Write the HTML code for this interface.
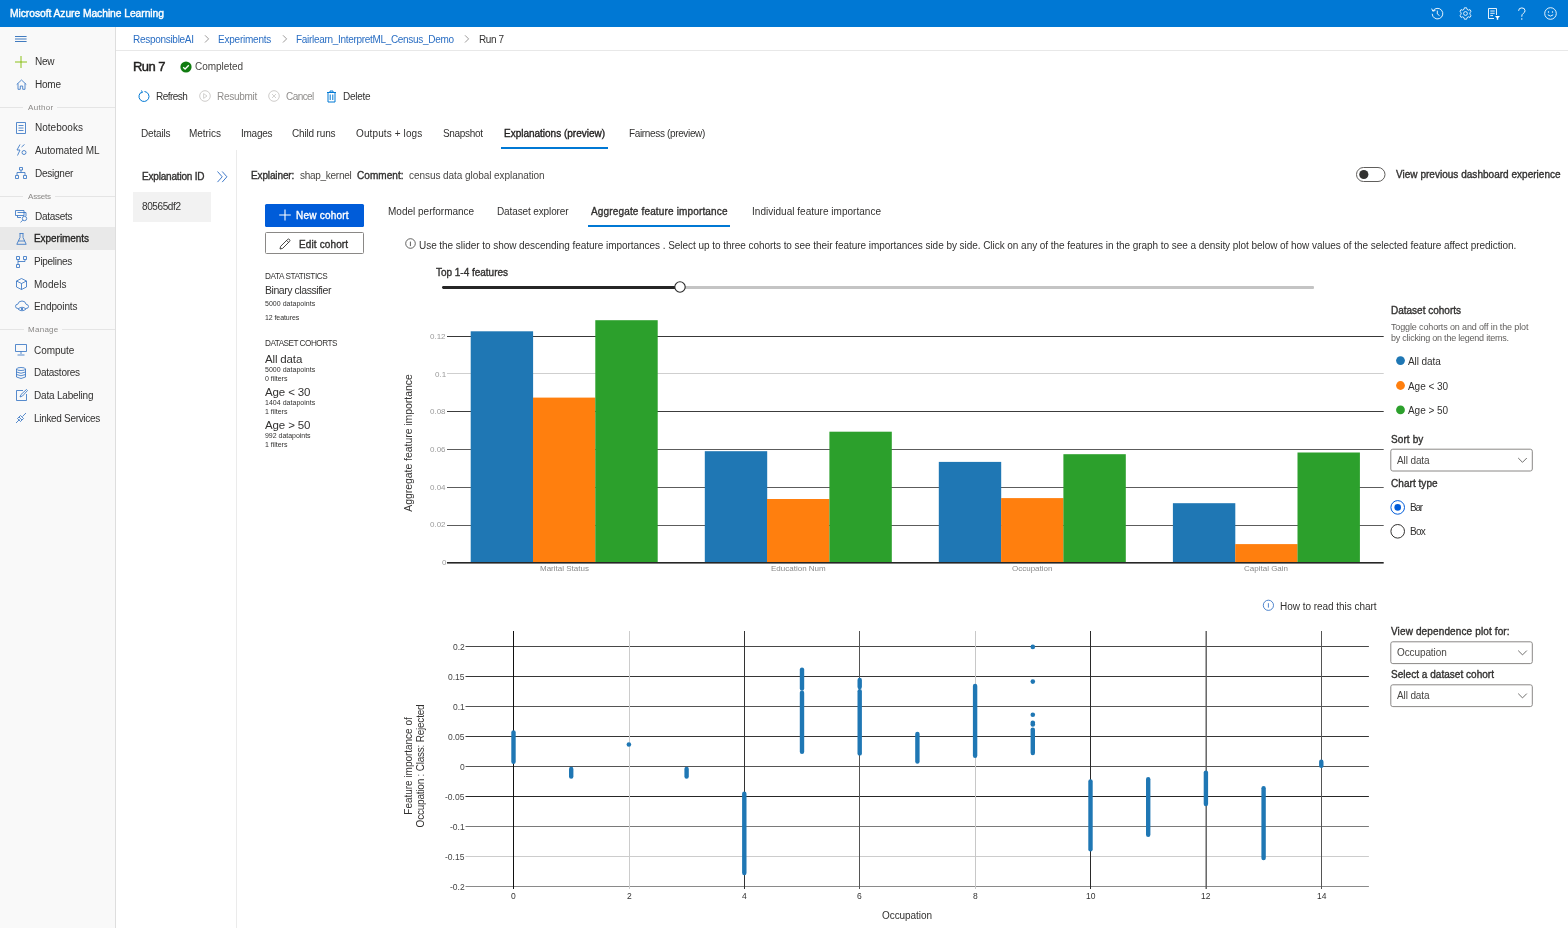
<!DOCTYPE html>
<html><head><meta charset="utf-8"><title>Azure Machine Learning - Run 7</title>
<style>
html,body{margin:0;padding:0;}
body{width:1568px;height:928px;overflow:hidden;position:relative;background:#fff;font-family:"Liberation Sans",sans-serif;}
.t{position:absolute;will-change:transform;white-space:nowrap;line-height:20px;height:20px;}
.r{position:absolute;}
svg{position:absolute;overflow:visible;}
</style></head><body>
<div class="r" style="left:0px;top:0px;width:1568px;height:27.3px;background:#0078d4;"></div>
<div class="r" style="left:0px;top:27px;width:115px;height:901px;background:#f9f9f9;"></div>
<div class="r" style="left:115px;top:27px;width:1px;height:901px;background:#dedede;"></div>
<div class="r" style="left:116px;top:50px;width:1452px;height:1px;background:#e8e8e8;"></div>
<div class="r" style="left:0px;top:227px;width:115px;height:22.6px;background:#e9e9e9;"></div>
<div class="r" style="left:0px;top:107px;width:23px;height:1px;background:#e5e5e5;"></div>
<div class="r" style="left:57px;top:107px;width:58px;height:1px;background:#e5e5e5;"></div>
<div class="r" style="left:0px;top:196px;width:23px;height:1px;background:#e5e5e5;"></div>
<div class="r" style="left:55px;top:196px;width:60px;height:1px;background:#e5e5e5;"></div>
<div class="r" style="left:0px;top:329px;width:24px;height:1px;background:#e5e5e5;"></div>
<div class="r" style="left:62px;top:329px;width:53px;height:1px;background:#e5e5e5;"></div>
<div class="r" style="left:236px;top:150px;width:1px;height:778px;background:#ebebeb;"></div>
<div class="r" style="left:133px;top:192px;width:78px;height:29.6px;background:#f2f2f2;"></div>
<div class="r" style="left:501px;top:147px;width:107px;height:2px;background:#0078d4;"></div>
<div class="r" style="left:588px;top:225px;width:142px;height:2px;background:#0078d4;"></div>
<div class="t" style="left:10.00px;top:4.20px;font-size:10.3px;color:#ffffff;letter-spacing:-0.056px;-webkit-text-stroke:0.4px #fff;">Microsoft Azure Machine Learning</div>
<div class="t" style="left:133.40px;top:29.60px;font-size:10px;color:#2a6ec3;letter-spacing:-0.290px;">ResponsibleAI</div>
<div class="t" style="left:296.00px;top:29.60px;font-size:10px;color:#2a6ec3;letter-spacing:-0.308px;">Fairlearn_InterpretML_Census_Demo</div>
<div class="t" style="left:218.40px;top:29.60px;font-size:10px;color:#2a6ec3;letter-spacing:-0.228px;">Experiments</div>
<div class="t" style="left:478.70px;top:29.60px;font-size:10px;color:#323130;letter-spacing:-0.421px;">Run 7</div>
<svg style="left:203.5px;top:34.6px" width="6" height="9" viewBox="0 0 6 9"><path d="M1 0.3 L4.6 3.9 L1 7.5" fill="none" stroke="#8a8886" stroke-width="0.85"/></svg>
<svg style="left:281.5px;top:34.6px" width="6" height="9" viewBox="0 0 6 9"><path d="M1 0.3 L4.6 3.9 L1 7.5" fill="none" stroke="#8a8886" stroke-width="0.85"/></svg>
<svg style="left:463.5px;top:34.6px" width="6" height="9" viewBox="0 0 6 9"><path d="M1 0.3 L4.6 3.9 L1 7.5" fill="none" stroke="#8a8886" stroke-width="0.85"/></svg>
<div class="t" style="left:133.40px;top:57.10px;font-size:13px;color:#201f1e;letter-spacing:-0.523px;-webkit-text-stroke:0.45px #201f1e;">Run 7</div>
<svg style="left:180px;top:61px" width="12" height="12" viewBox="0 0 12 12"><circle cx="6" cy="6" r="5.6" fill="#107c10"/><path d="M3.2 6.2 L5.1 8 L8.8 4.3" fill="none" stroke="#fff" stroke-width="1.3"/></svg>
<div class="t" style="left:195.00px;top:56.90px;font-size:10px;color:#484644;letter-spacing:-0.045px;">Completed</div>
<svg style="left:138px;top:89.8px" width="13" height="13" viewBox="0 0 13 13"><path d="M4.2 1.8 A5 5 0 1 0 6.5 1.5" fill="none" stroke="#0078d4" stroke-width="1"/><path d="M3.2 0.6 L4.6 1.9 L3.3 3.3" fill="none" stroke="#0078d4" stroke-width="1"/></svg>
<div class="t" style="left:155.80px;top:86.60px;font-size:10px;color:#323130;letter-spacing:-0.552px;">Refresh</div>
<svg style="left:198.5px;top:90px" width="12" height="12" viewBox="0 0 12 12"><circle cx="6" cy="6" r="5.3" fill="none" stroke="#c8c6c4" stroke-width="0.9"/><path d="M4.6 3.6 L8 6 L4.6 8.4 Z" fill="none" stroke="#c8c6c4" stroke-width="0.8"/></svg>
<div class="t" style="left:216.60px;top:86.60px;font-size:10px;color:#8f8d8b;letter-spacing:-0.291px;">Resubmit</div>
<svg style="left:267.5px;top:90px" width="12" height="12" viewBox="0 0 12 12"><circle cx="6" cy="6" r="5.3" fill="none" stroke="#c8c6c4" stroke-width="0.9"/><path d="M4 4 L8 8 M8 4 L4 8" stroke="#c8c6c4" stroke-width="0.8"/></svg>
<div class="t" style="left:285.50px;top:86.60px;font-size:10px;color:#8f8d8b;letter-spacing:-0.566px;">Cancel</div>
<svg style="left:325.5px;top:89.5px" width="11" height="13" viewBox="0 0 11 13"><path d="M1 2.5 H10 M4 2.5 V1 H7 V2.5 M2 2.5 V12 H9 V2.5 M4.2 4.5 V10 M6.8 4.5 V10" fill="none" stroke="#0078d4" stroke-width="1"/></svg>
<div class="t" style="left:343.00px;top:86.60px;font-size:10px;color:#323130;letter-spacing:-0.261px;">Delete</div>
<div class="t" style="left:140.50px;top:124.40px;font-size:10px;color:#323130;letter-spacing:-0.161px;">Details</div>
<div class="t" style="left:189.40px;top:124.40px;font-size:10px;color:#323130;letter-spacing:-0.037px;">Metrics</div>
<div class="t" style="left:240.50px;top:124.40px;font-size:10px;color:#323130;letter-spacing:-0.259px;">Images</div>
<div class="t" style="left:291.60px;top:124.40px;font-size:10px;color:#323130;letter-spacing:-0.158px;">Child runs</div>
<div class="t" style="left:355.90px;top:124.40px;font-size:10px;color:#323130;letter-spacing:0.118px;">Outputs + logs</div>
<div class="t" style="left:442.50px;top:124.40px;font-size:10px;color:#323130;letter-spacing:-0.308px;">Snapshot</div>
<div class="t" style="left:503.90px;top:124.40px;font-size:10px;color:#201f1e;letter-spacing:-0.008px;-webkit-text-stroke:0.35px #201f1e;">Explanations (preview)</div>
<div class="t" style="left:628.60px;top:124.40px;font-size:10px;color:#323130;letter-spacing:-0.350px;">Fairness (preview)</div>
<svg style="left:15.3px;top:34px" width="13" height="10" viewBox="0 0 13 10"><path d="M0 2.5 H11.6 M0 5 H11.6 M0 7.5 H11.6" stroke="#2b6cb8" stroke-width="0.9"/></svg>
<svg style="left:15px;top:55.5px" width="12" height="12" viewBox="0 0 12 12"><path d="M6 0 V12 M0 6 H12" stroke="#7fba00" stroke-width="0.9"/></svg>
<div class="t" style="left:34.50px;top:52.20px;font-size:10px;color:#323130;letter-spacing:-0.252px;">New</div>
<svg style="left:15.5px;top:79px" width="11" height="11" viewBox="0 0 11 11"><path d="M0.7 5.5 L5.5 1 L10.3 5.5 M2 4.5 V10.3 H4.3 V7 H6.7 V10.3 H9 V4.5" fill="none" stroke="#2d6fc2" stroke-width="0.8"/></svg>
<div class="t" style="left:34.50px;top:75.20px;font-size:10px;color:#323130;letter-spacing:-0.225px;">Home</div>
<div class="t" style="left:27.80px;top:98.00px;font-size:8px;color:#8a8886;letter-spacing:0.326px;">Author</div>
<svg style="left:16px;top:121.5px" width="10" height="12" viewBox="0 0 10 12"><path d="M0.5 0.5 H9.5 V11.5 H0.5 Z M2.5 3.5 H7.5 M2.5 6 H7.5 M2.5 8.5 H7.5" fill="none" stroke="#2d6fc2" stroke-width="0.8"/></svg>
<div class="t" style="left:34.50px;top:118.20px;font-size:10px;color:#323130;letter-spacing:0.012px;">Notebooks</div>
<svg style="left:16px;top:144px" width="11" height="12" viewBox="0 0 11 12"><path d="M4 0.5 L1 6 H4 L1.5 11.5 M5.5 3 L8.5 0.5" fill="none" stroke="#2d6fc2" stroke-width="0.8"/><circle cx="8" cy="8.5" r="2" fill="none" stroke="#2d6fc2" stroke-width="0.8"/></svg>
<div class="t" style="left:34.50px;top:141.10px;font-size:10px;color:#323130;letter-spacing:-0.049px;">Automated ML</div>
<svg style="left:15px;top:167px" width="12" height="12" viewBox="0 0 12 12"><path d="M4.5 0.5 H7.5 V3 H4.5 Z M6 3 V5.5 M2 5.5 H10 M2 5.5 V8 M10 5.5 V8 M0.5 8.5 H3.5 V11.5 H0.5 Z M8.5 8.5 H11.5 V11.5 H8.5 Z" fill="none" stroke="#2d6fc2" stroke-width="0.8"/></svg>
<div class="t" style="left:34.50px;top:163.60px;font-size:10px;color:#323130;letter-spacing:-0.246px;">Designer</div>
<div class="t" style="left:28.00px;top:186.80px;font-size:8px;color:#8a8886;letter-spacing:-0.202px;">Assets</div>
<svg style="left:15px;top:210px" width="14" height="13" viewBox="0 0 14 13"><path d="M0.5 0.5 H9 V5.5 H0.5 Z M2.5 2.5 H11 V6 M2.5 5.5 V7.5 H6" fill="none" stroke="#2d6fc2" stroke-width="0.8"/><circle cx="9.5" cy="8.5" r="2.2" fill="none" stroke="#2d6fc2" stroke-width="0.8"/><path d="M7.8 10.2 L5.5 12.3" stroke="#2d6fc2" stroke-width="0.8"/></svg>
<div class="t" style="left:34.50px;top:206.60px;font-size:10px;color:#323130;letter-spacing:-0.280px;">Datasets</div>
<svg style="left:15.5px;top:232.5px" width="11" height="12" viewBox="0 0 11 12"><path d="M3.5 0.5 H7.5 M4 0.5 V4.5 L0.8 11.3 H10.2 L7 4.5 V0.5 M2.3 8 H8.7" fill="none" stroke="#2d6fc2" stroke-width="0.8"/></svg>
<div class="t" style="left:34.10px;top:229.40px;font-size:10px;color:#201f1e;letter-spacing:-0.048px;-webkit-text-stroke:0.3px #201f1e;">Experiments</div>
<svg style="left:15.5px;top:255.5px" width="11" height="12" viewBox="0 0 11 12"><path d="M0.5 0.5 H3.5 V3.5 H0.5 Z M7.5 0.5 H10.5 V3.5 H7.5 Z M0.5 8.5 H3.5 V11.5 H0.5 Z M2 3.5 V8.5 M9 3.5 V5.5 H2" fill="none" stroke="#2d6fc2" stroke-width="0.8"/></svg>
<div class="t" style="left:34.10px;top:252.10px;font-size:10px;color:#323130;letter-spacing:-0.285px;">Pipelines</div>
<svg style="left:15.5px;top:278px" width="11" height="12" viewBox="0 0 11 12"><path d="M5.5 0.5 L10.5 3 V9 L5.5 11.5 L0.5 9 V3 Z M0.5 3 L5.5 5.5 L10.5 3 M5.5 5.5 V11.5" fill="none" stroke="#2d6fc2" stroke-width="0.8"/></svg>
<div class="t" style="left:34.10px;top:274.60px;font-size:10px;color:#323130;letter-spacing:0.033px;">Models</div>
<svg style="left:14.5px;top:300px" width="14" height="13" viewBox="0 0 14 13"><path d="M3 8.5 Q0.5 8.5 0.5 6.3 Q0.5 4.2 2.8 4.2 Q3.5 1 7 1 Q10.5 1 11 4.2 Q13.5 4.5 13.5 6.5 Q13.5 8.5 11 8.5" fill="none" stroke="#2d6fc2" stroke-width="0.8"/><path d="M3 9 Q7 5.5 11 9 Q7 12.5 3 9 Z" fill="none" stroke="#2d6fc2" stroke-width="0.8"/><circle cx="7" cy="9" r="1.1" fill="#2d6fc2"/></svg>
<div class="t" style="left:34.10px;top:297.40px;font-size:10px;color:#323130;letter-spacing:-0.122px;">Endpoints</div>
<div class="t" style="left:27.70px;top:319.90px;font-size:8px;color:#8a8886;letter-spacing:0.278px;">Manage</div>
<svg style="left:15px;top:344px" width="12" height="12" viewBox="0 0 12 12"><path d="M0.5 0.5 H11.5 V7.5 H0.5 Z M6 7.5 V10 M2.5 11 H9.5" fill="none" stroke="#2d6fc2" stroke-width="0.8"/></svg>
<div class="t" style="left:34.10px;top:340.60px;font-size:10px;color:#323130;letter-spacing:-0.029px;">Compute</div>
<svg style="left:16px;top:366.5px" width="10" height="12" viewBox="0 0 10 12"><ellipse cx="5" cy="2" rx="4.5" ry="1.5" fill="none" stroke="#2d6fc2" stroke-width="0.8"/><path d="M0.5 2 V10 Q5 13 9.5 10 V2 M0.5 5 Q5 7.5 9.5 5 M0.5 7.5 Q5 10 9.5 7.5" fill="none" stroke="#2d6fc2" stroke-width="0.8"/></svg>
<div class="t" style="left:34.10px;top:363.30px;font-size:10px;color:#323130;letter-spacing:-0.251px;">Datastores</div>
<svg style="left:15.5px;top:389px" width="12" height="12" viewBox="0 0 12 12"><path d="M0.5 1.5 H7 M0.5 1.5 V11.5 H10.5 V5 M4 8 L5 5.5 L10.5 0.5 L11.5 1.5 L6.5 7 Z" fill="none" stroke="#2d6fc2" stroke-width="0.8"/></svg>
<div class="t" style="left:34.10px;top:385.80px;font-size:10px;color:#323130;letter-spacing:-0.185px;">Data Labeling</div>
<svg style="left:15px;top:412px" width="12" height="12" viewBox="0 0 12 12"><path d="M1 11 L4.5 7.5 M7.5 4.5 L11 1 M2.5 6.5 L5.5 3.5 L8.5 6.5 L5.5 9.5 Z M4 5 L7 8" fill="none" stroke="#2d6fc2" stroke-width="0.8"/></svg>
<div class="t" style="left:34.10px;top:408.60px;font-size:10px;color:#323130;letter-spacing:-0.314px;">Linked Services</div>
<svg style="left:1430.5px;top:7px" width="13" height="13" viewBox="0 0 13 13"><path d="M1.9 4 A5.3 5.3 0 1 1 1.2 6.8" fill="none" stroke="#fff" stroke-width="0.9"/><path d="M0.7 1.6 L1.8 4.2 L4.4 3.4" fill="none" stroke="#fff" stroke-width="0.9"/><path d="M6.3 3.6 V6.9 L8.5 8.6" fill="none" stroke="#fff" stroke-width="0.9"/></svg>
<svg style="left:1459px;top:7px" width="13" height="13" viewBox="0 0 13 13"><path d="M5.4 0.8 H7.6 L8 2.4 L9.5 3.2 L11 2.6 L12.1 4.5 L10.9 5.6 V7.4 L12.1 8.5 L11 10.4 L9.5 9.8 L8 10.6 L7.6 12.2 H5.4 L5 10.6 L3.5 9.8 L2 10.4 L0.9 8.5 L2.1 7.4 V5.6 L0.9 4.5 L2 2.6 L3.5 3.2 L5 2.4 Z" fill="none" stroke="#fff" stroke-width="0.85"/><circle cx="6.5" cy="6.5" r="1.9" fill="none" stroke="#fff" stroke-width="0.85"/></svg>
<svg style="left:1488px;top:7.5px" width="13" height="12" viewBox="0 0 13 12"><path d="M0.5 0.5 H8.5 V7 M0.5 0.5 V10.5 H6 M2.3 3 H6.7 M2.3 5.3 H6.7 M2.3 7.6 H5" fill="none" stroke="#fff" stroke-width="0.9"/><path d="M7 8 H12 L10.2 10 V11.8 H8.8 V10 Z" fill="#fff"/></svg>
<svg style="left:1517px;top:7px" width="10" height="14" viewBox="0 0 10 14"><path d="M1.6 3.8 Q1.6 0.9 4.8 0.9 Q8 0.9 8 3.7 Q8 5.4 6.2 6.5 Q4.8 7.4 4.8 9.2 V9.8" fill="none" stroke="#fff" stroke-width="0.95"/><circle cx="4.8" cy="12" r="0.7" fill="#fff"/></svg>
<svg style="left:1544px;top:7px" width="13" height="13" viewBox="0 0 13 13"><circle cx="6.5" cy="6.5" r="5.8" fill="none" stroke="#fff" stroke-width="0.9"/><circle cx="4.5" cy="5" r="0.7" fill="#fff"/><circle cx="8.5" cy="5" r="0.7" fill="#fff"/><path d="M3.8 7.8 Q6.5 10.4 9.2 7.8" fill="none" stroke="#fff" stroke-width="0.9"/></svg>
<div class="t" style="left:141.60px;top:166.80px;font-size:10px;color:#323130;letter-spacing:-0.188px;-webkit-text-stroke:0.35px #323130;">Explanation ID</div>
<svg style="left:216.5px;top:170.8px" width="12" height="12" viewBox="0 0 12 12"><path d="M0.5 0.5 L5.2 5.8 L0.5 11.1 M5.2 0.5 L9.9 5.8 L5.2 11.1" fill="none" stroke="#2b6cc4" stroke-width="0.9"/></svg>
<div class="t" style="left:141.60px;top:197.00px;font-size:10px;color:#323130;letter-spacing:-0.387px;">80565df2</div>
<div class="t" style="left:250.70px;top:165.50px;font-size:10px;color:#323130;letter-spacing:-0.130px;-webkit-text-stroke:0.35px #323130;">Explainer:</div>
<div class="t" style="left:299.80px;top:165.50px;font-size:10px;color:#484644;letter-spacing:-0.278px;">shap_kernel</div>
<div class="t" style="left:357.20px;top:165.50px;font-size:10px;color:#323130;letter-spacing:0.054px;-webkit-text-stroke:0.35px #323130;">Comment:</div>
<div class="t" style="left:408.90px;top:165.50px;font-size:10px;color:#484644;letter-spacing:-0.059px;">census data global explanation</div>
<svg style="left:1355.5px;top:166.5px" width="30" height="15" viewBox="0 0 30 15"><rect x="0.5" y="0.5" width="28.5" height="14" rx="7" fill="#fff" stroke="#605e5c" stroke-width="1"/><circle cx="7.8" cy="7.5" r="4.6" fill="#323130"/></svg>
<div class="t" style="left:1396.10px;top:165.10px;font-size:10px;color:#323130;letter-spacing:0.024px;-webkit-text-stroke:0.35px #323130;">View previous dashboard experience</div>
<div class="r" style="left:264.8px;top:204.1px;width:99.1px;height:22.8px;background:#005cd9;border-radius:1.5px;"></div>
<svg style="left:279px;top:209.4px" width="13" height="13" viewBox="0 0 13 13"><path d="M6 0.5 V11.5 M0.2 6 H11.8" stroke="#fff" stroke-width="1.1"/></svg>
<div class="t" style="left:296.30px;top:206.10px;font-size:10px;color:#ffffff;letter-spacing:0.225px;-webkit-text-stroke:0.35px #ffffff;">New cohort</div>
<div class="r" style="left:264.8px;top:232.3px;width:97.7px;height:20.2px;background:#fff;border:1px solid #8a8886;border-radius:1.5px;"></div>
<svg style="left:279px;top:237.5px" width="12" height="12" viewBox="0 0 12 12"><path d="M1 11 L1.6 8.4 L8.6 1.4 Q9.6 0.6 10.5 1.5 Q11.4 2.4 10.6 3.4 L3.6 10.4 Z M7.6 2.4 L9.6 4.4" fill="none" stroke="#323130" stroke-width="0.9"/></svg>
<div class="t" style="left:298.90px;top:235.40px;font-size:10px;color:#323130;letter-spacing:0.130px;-webkit-text-stroke:0.35px #323130;">Edit cohort</div>
<div class="t" style="left:264.80px;top:267.20px;font-size:8.2px;color:#323130;letter-spacing:-0.410px;">DATA STATISTICS</div>
<div class="t" style="left:264.80px;top:280.20px;font-size:10.5px;color:#323130;letter-spacing:-0.445px;">Binary classifier</div>
<div class="t" style="left:264.80px;top:294.10px;font-size:7px;color:#323130;letter-spacing:0.027px;">5000 datapoints</div>
<div class="t" style="left:264.80px;top:307.80px;font-size:7px;color:#323130;letter-spacing:-0.082px;">12 features</div>
<div class="t" style="left:264.80px;top:334.10px;font-size:8.2px;color:#323130;letter-spacing:-0.506px;">DATASET COHORTS</div>
<div class="t" style="left:264.80px;top:348.80px;font-size:11.5px;color:#323130;letter-spacing:-0.151px;">All data</div>
<div class="t" style="left:264.80px;top:360.00px;font-size:7px;color:#323130;letter-spacing:0.027px;">5000 datapoints</div>
<div class="t" style="left:264.80px;top:369.00px;font-size:7px;color:#323130;letter-spacing:-0.020px;">0 filters</div>
<div class="t" style="left:264.80px;top:382.00px;font-size:11.5px;color:#323130;letter-spacing:-0.123px;">Age &lt; 30</div>
<div class="t" style="left:264.80px;top:392.80px;font-size:7px;color:#323130;letter-spacing:0.027px;">1404 datapoints</div>
<div class="t" style="left:264.80px;top:402.00px;font-size:7px;color:#323130;letter-spacing:-0.020px;">1 filters</div>
<div class="t" style="left:264.80px;top:414.70px;font-size:11.5px;color:#323130;letter-spacing:-0.123px;">Age &gt; 50</div>
<div class="t" style="left:264.80px;top:425.60px;font-size:7px;color:#323130;letter-spacing:-0.025px;">992 datapoints</div>
<div class="t" style="left:264.80px;top:435.20px;font-size:7px;color:#323130;letter-spacing:-0.020px;">1 filters</div>
<div class="t" style="left:387.60px;top:201.80px;font-size:10px;color:#323130;">Model performance</div>
<div class="t" style="left:496.80px;top:201.80px;font-size:10px;color:#323130;letter-spacing:-0.118px;">Dataset explorer</div>
<div class="t" style="left:590.80px;top:201.80px;font-size:10px;color:#323130;letter-spacing:0.155px;-webkit-text-stroke:0.35px #323130;">Aggregate feature importance</div>
<div class="t" style="left:752.00px;top:201.80px;font-size:10px;color:#323130;letter-spacing:0.021px;">Individual feature importance</div>
<svg style="left:405.1px;top:237.5px" width="11" height="11" viewBox="0 0 11 11"><circle cx="5.5" cy="5.5" r="4.8" fill="none" stroke="#323130" stroke-width="0.75"/><path d="M5.4 3.6 V8.1" stroke="#323130" stroke-width="0.8"/></svg>
<div class="t" style="left:419.00px;top:236.40px;font-size:10px;color:#323130;letter-spacing:-0.047px;">Use the slider to show descending feature importances . Select up to three cohorts to see their feature importances side by side. Click on any of the features in the graph to see a density plot below of how values of the selected feature affect prediction.</div>
<div class="t" style="left:436.00px;top:262.80px;font-size:10px;color:#323130;letter-spacing:-0.018px;-webkit-text-stroke:0.35px #323130;">Top 1-4 features</div>
<div class="r" style="left:442px;top:285.9px;width:237px;height:2.8px;background:#262626;border-radius:1.4px;"></div>
<div class="r" style="left:679px;top:286.2px;width:635px;height:2.5px;background:#c4c4c4;border-radius:1px;"></div>
<svg style="left:672.5px;top:280.4px" width="14" height="14" viewBox="0 0 14 14"><circle cx="7" cy="7" r="5.2" fill="#fff" stroke="#2a2a2a" stroke-width="1.1"/></svg>
<svg style="left:0;top:0" width="1568" height="928" viewBox="0 0 1568 928">
<rect x="447" y="336" width="936.7" height="1" fill="#383838"/>
<rect x="447" y="373" width="936.7" height="1" fill="#cfcfcf"/>
<rect x="447" y="411" width="936.7" height="1" fill="#3c3c3c"/>
<rect x="447" y="449" width="936.7" height="1" fill="#5c5c5c"/>
<rect x="447" y="487" width="936.7" height="1" fill="#5c5c5c"/>
<rect x="447" y="525" width="936.7" height="1" fill="#5c5c5c"/>
<rect x="470.7" y="331.3" width="62.4" height="231.0" fill="#1f77b4"/>
<rect x="533.0" y="397.6" width="62.4" height="164.7" fill="#ff7f0e"/>
<rect x="595.3" y="320.2" width="62.4" height="242.1" fill="#2ca02c"/>
<rect x="704.8" y="451.2" width="62.4" height="111.1" fill="#1f77b4"/>
<rect x="767.0" y="499.0" width="62.4" height="63.3" fill="#ff7f0e"/>
<rect x="829.4" y="431.7" width="62.4" height="130.6" fill="#2ca02c"/>
<rect x="938.8" y="461.9" width="62.4" height="100.4" fill="#1f77b4"/>
<rect x="1001.1" y="498.1" width="62.4" height="64.2" fill="#ff7f0e"/>
<rect x="1063.4" y="454.2" width="62.4" height="108.1" fill="#2ca02c"/>
<rect x="1172.9" y="503.2" width="62.4" height="59.1" fill="#1f77b4"/>
<rect x="1235.2" y="544.1" width="62.4" height="18.2" fill="#ff7f0e"/>
<rect x="1297.5" y="452.5" width="62.4" height="109.8" fill="#2ca02c"/>
<rect x="447" y="562" width="936.7" height="1.6" fill="#262626"/>
<rect x="465.5" y="646" width="903.4" height="1" fill="#474747"/>
<rect x="465.5" y="676" width="903.4" height="1" fill="#363636"/>
<rect x="465.5" y="706" width="903.4" height="1" fill="#555555"/>
<rect x="465.5" y="736" width="903.4" height="1" fill="#363636"/>
<rect x="465.5" y="766" width="903.4" height="1" fill="#555555"/>
<rect x="465.5" y="796" width="903.4" height="1" fill="#262626"/>
<rect x="465.5" y="826" width="903.4" height="1" fill="#7a7a7a"/>
<rect x="465.5" y="856" width="903.4" height="1" fill="#cccccc"/>
<rect x="465.5" y="886" width="903.4" height="1" fill="#8a8a8a"/>
<rect x="513" y="631" width="1" height="258" fill="#111111"/>
<rect x="629" y="631" width="1" height="258" fill="#cccccc"/>
<rect x="744" y="631" width="1" height="258" fill="#333333"/>
<rect x="859" y="631" width="1" height="258" fill="#555555"/>
<rect x="975" y="631" width="1" height="258" fill="#c8c8c8"/>
<rect x="1090" y="631" width="1" height="258" fill="#2a2a2a"/>
<rect x="1205.5" y="631" width="1.4" height="258" fill="#5a5a5a"/>
<rect x="1321" y="631" width="1" height="258" fill="#555555"/>
<line x1="513.5" y1="732.5" x2="513.5" y2="761.8" stroke="#1f77b4" stroke-width="4.4" stroke-linecap="round"/>
<line x1="571.2" y1="768.9" x2="571.2" y2="776.5" stroke="#1f77b4" stroke-width="4.4" stroke-linecap="round"/>
<line x1="686.6" y1="768.9" x2="686.6" y2="776.5" stroke="#1f77b4" stroke-width="4.4" stroke-linecap="round"/>
<line x1="744.3" y1="793.7" x2="744.3" y2="873.0" stroke="#1f77b4" stroke-width="4.4" stroke-linecap="round"/>
<line x1="802.0" y1="669.6" x2="802.0" y2="688.6" stroke="#1f77b4" stroke-width="4.4" stroke-linecap="round"/>
<line x1="802.0" y1="692.8" x2="802.0" y2="751.7" stroke="#1f77b4" stroke-width="4.4" stroke-linecap="round"/>
<line x1="859.7" y1="679.9" x2="859.7" y2="687.0" stroke="#1f77b4" stroke-width="4.4" stroke-linecap="round"/>
<line x1="859.7" y1="691.2" x2="859.7" y2="753.4" stroke="#1f77b4" stroke-width="4.4" stroke-linecap="round"/>
<line x1="917.4" y1="734.0" x2="917.4" y2="761.6" stroke="#1f77b4" stroke-width="4.4" stroke-linecap="round"/>
<line x1="975.1" y1="686.0" x2="975.1" y2="755.8" stroke="#1f77b4" stroke-width="4.4" stroke-linecap="round"/>
<line x1="1032.8" y1="729.6" x2="1032.8" y2="753.1" stroke="#1f77b4" stroke-width="4.4" stroke-linecap="round"/>
<line x1="1090.5" y1="781.5" x2="1090.5" y2="849.3" stroke="#1f77b4" stroke-width="4.4" stroke-linecap="round"/>
<line x1="1148.2" y1="779.2" x2="1148.2" y2="834.7" stroke="#1f77b4" stroke-width="4.4" stroke-linecap="round"/>
<line x1="1205.9" y1="772.6" x2="1205.9" y2="804.1" stroke="#1f77b4" stroke-width="4.4" stroke-linecap="round"/>
<line x1="1263.6" y1="788.3" x2="1263.6" y2="858.0" stroke="#1f77b4" stroke-width="4.4" stroke-linecap="round"/>
<line x1="1321.3" y1="761.8" x2="1321.3" y2="765.8" stroke="#1f77b4" stroke-width="4.4" stroke-linecap="round"/>
<circle cx="628.9" cy="744.5" r="2.3" fill="#1f77b4"/>
<circle cx="1032.8" cy="646.9" r="2.3" fill="#1f77b4"/>
<circle cx="1032.8" cy="681.6" r="2.3" fill="#1f77b4"/>
<circle cx="1032.8" cy="714.7" r="2.3" fill="#1f77b4"/>
<circle cx="1032.8" cy="722.8" r="2.3" fill="#1f77b4"/>
<circle cx="1032.8" cy="724.4" r="2.3" fill="#1f77b4"/>
<circle cx="1400.5" cy="360.6" r="4.4" fill="#1f77b4"/>
<circle cx="1400.5" cy="385.5" r="4.4" fill="#ff7f0e"/>
<circle cx="1400.5" cy="409.9" r="4.4" fill="#2ca02c"/>
<rect x="1390.8" y="449.2" width="141.5" height="21.8" rx="2" fill="#fff" stroke="#8a8886" stroke-width="1"/>
<path d="M1518.2 458.0 L1522.5 462.3 L1526.8 458.0" fill="none" stroke="#605e5c" stroke-width="0.9"/>
<rect x="1390.8" y="641.8" width="141.5" height="21.8" rx="2" fill="#fff" stroke="#8a8886" stroke-width="1"/>
<path d="M1518.2 650.6 L1522.5 654.9 L1526.8 650.6" fill="none" stroke="#605e5c" stroke-width="0.9"/>
<rect x="1390.8" y="684.8" width="141.5" height="21.8" rx="2" fill="#fff" stroke="#8a8886" stroke-width="1"/>
<path d="M1518.2 693.6 L1522.5 697.9 L1526.8 693.6" fill="none" stroke="#605e5c" stroke-width="0.9"/>
<circle cx="1397.7" cy="507.4" r="6.8" fill="#fff" stroke="#005cd9" stroke-width="1"/><circle cx="1397.7" cy="507.4" r="3.3" fill="#005cd9"/>
<circle cx="1397.7" cy="531.3" r="6.8" fill="#fff" stroke="#323130" stroke-width="1"/>
<circle cx="1268.4" cy="605.3" r="5.1" fill="none" stroke="#3170c4" stroke-width="0.85"/><path d="M1268.4 603.2 V607.6" stroke="#3170c4" stroke-width="0.85"/>
</svg>
<div class="t" style="left:430.43px;top:326.80px;font-size:8px;color:#9a9a9a;">0.12</div>
<div class="t" style="left:434.88px;top:364.52px;font-size:8px;color:#9a9a9a;">0.1</div>
<div class="t" style="left:430.43px;top:402.24px;font-size:8px;color:#9a9a9a;">0.08</div>
<div class="t" style="left:430.43px;top:439.96px;font-size:8px;color:#9a9a9a;">0.06</div>
<div class="t" style="left:430.43px;top:477.68px;font-size:8px;color:#9a9a9a;">0.04</div>
<div class="t" style="left:430.43px;top:515.40px;font-size:8px;color:#9a9a9a;">0.02</div>
<div class="t" style="left:441.55px;top:553.12px;font-size:8px;color:#9a9a9a;">0</div>
<div class="t" style="left:539.75px;top:559.30px;font-size:8px;color:#8a8a8a;">Marital Status</div>
<div class="t" style="left:770.90px;top:559.30px;font-size:8px;color:#8a8a8a;">Education Num</div>
<div class="t" style="left:1012.07px;top:559.30px;font-size:8px;color:#8a8a8a;">Occupation</div>
<div class="t" style="left:1244.34px;top:559.30px;font-size:8px;color:#8a8a8a;">Capital Gain</div>
<div class="t" style="left:339.35px;top:432.60px;font-size:10.5px;color:#323130;letter-spacing:-0.053px;transform:rotate(-90deg);transform-origin:50% 50%;will-change:auto;">Aggregate feature importance</div>
<div class="t" style="left:1391.40px;top:301.20px;font-size:10px;color:#323130;-webkit-text-stroke:0.35px #323130;">Dataset cohorts</div>
<div class="t" style="left:1391.20px;top:316.60px;font-size:9px;color:#605e5c;letter-spacing:-0.140px;">Toggle cohorts on and off in the plot</div>
<div class="t" style="left:1391.20px;top:327.80px;font-size:9px;color:#605e5c;letter-spacing:-0.228px;">by clicking on the legend items.</div>
<div class="t" style="left:1407.90px;top:352.00px;font-size:10px;color:#323130;letter-spacing:-0.094px;">All data</div>
<div class="t" style="left:1407.90px;top:376.80px;font-size:10px;color:#323130;letter-spacing:-0.045px;">Age &lt; 30</div>
<div class="t" style="left:1407.90px;top:401.10px;font-size:10px;color:#323130;letter-spacing:-0.045px;">Age &gt; 50</div>
<div class="t" style="left:1391.00px;top:430.20px;font-size:10px;color:#323130;letter-spacing:0.103px;-webkit-text-stroke:0.35px #323130;">Sort by</div>
<div class="t" style="left:1397.20px;top:451.20px;font-size:10px;color:#484644;letter-spacing:-0.108px;">All data</div>
<div class="t" style="left:1391.00px;top:473.60px;font-size:10px;color:#323130;letter-spacing:0.052px;-webkit-text-stroke:0.35px #323130;">Chart type</div>
<div class="t" style="left:1409.50px;top:498.00px;font-size:10px;color:#323130;letter-spacing:-1.181px;">Bar</div>
<div class="t" style="left:1409.50px;top:521.90px;font-size:10px;color:#323130;letter-spacing:-0.716px;">Box</div>
<div class="t" style="left:452.68px;top:637.20px;font-size:8.5px;color:#444444;">0.2</div>
<div class="t" style="left:447.96px;top:667.20px;font-size:8.5px;color:#444444;">0.15</div>
<div class="t" style="left:452.68px;top:697.20px;font-size:8.5px;color:#444444;">0.1</div>
<div class="t" style="left:447.96px;top:727.20px;font-size:8.5px;color:#444444;">0.05</div>
<div class="t" style="left:459.77px;top:757.20px;font-size:8.5px;color:#444444;">0</div>
<div class="t" style="left:445.13px;top:787.20px;font-size:8.5px;color:#444444;">-0.05</div>
<div class="t" style="left:449.85px;top:817.20px;font-size:8.5px;color:#444444;">-0.1</div>
<div class="t" style="left:445.13px;top:847.20px;font-size:8.5px;color:#444444;">-0.15</div>
<div class="t" style="left:449.85px;top:877.20px;font-size:8.5px;color:#444444;">-0.2</div>
<div class="t" style="left:511.14px;top:885.50px;font-size:8.5px;color:#333333;">0</div>
<div class="t" style="left:626.54px;top:885.50px;font-size:8.5px;color:#333333;">2</div>
<div class="t" style="left:741.94px;top:885.50px;font-size:8.5px;color:#333333;">4</div>
<div class="t" style="left:857.34px;top:885.50px;font-size:8.5px;color:#333333;">6</div>
<div class="t" style="left:972.74px;top:885.50px;font-size:8.5px;color:#333333;">8</div>
<div class="t" style="left:1085.77px;top:885.50px;font-size:8.5px;color:#333333;">10</div>
<div class="t" style="left:1201.17px;top:885.50px;font-size:8.5px;color:#333333;">12</div>
<div class="t" style="left:1316.57px;top:885.50px;font-size:8.5px;color:#333333;">14</div>
<div class="t" style="left:359.60px;top:756.30px;font-size:10px;color:#323130;letter-spacing:-0.021px;transform:rotate(-90deg);transform-origin:50% 50%;will-change:auto;">Feature importance of</div>
<div class="t" style="left:360.40px;top:756.20px;font-size:10px;color:#323130;letter-spacing:-0.220px;transform:rotate(-90deg);transform-origin:50% 50%;will-change:auto;">Occupation : Class: Rejected</div>
<div class="t" style="left:882.00px;top:905.60px;font-size:10px;color:#323130;letter-spacing:-0.065px;">Occupation</div>
<div class="t" style="left:1280.00px;top:596.90px;font-size:10px;color:#323130;letter-spacing:-0.032px;">How to read this chart</div>
<div class="t" style="left:1391.00px;top:622.10px;font-size:10px;color:#323130;letter-spacing:0.131px;-webkit-text-stroke:0.35px #323130;">View dependence plot for:</div>
<div class="t" style="left:1397.30px;top:643.40px;font-size:10px;color:#484644;letter-spacing:-0.098px;">Occupation</div>
<div class="t" style="left:1391.00px;top:665.20px;font-size:10px;color:#323130;letter-spacing:0.032px;-webkit-text-stroke:0.35px #323130;">Select a dataset cohort</div>
<div class="t" style="left:1397.30px;top:686.40px;font-size:10px;color:#484644;letter-spacing:-0.122px;">All data</div>
</body></html>
